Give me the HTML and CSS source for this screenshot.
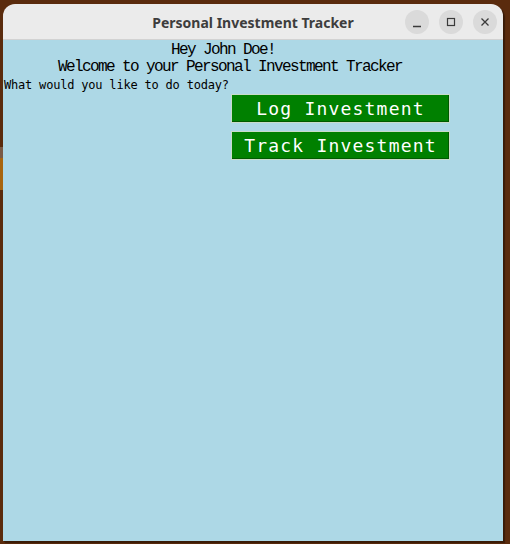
FILE: index.html
```html
<!DOCTYPE html>
<html>
<head>
<meta charset="utf-8">
<link rel="stylesheet" href="styles.css">
</head>
<body>
<div class="desk-mark mark-gray"></div>
<div class="desk-mark mark-orange"></div>
<div class="window">
  <div class="titlebar">
    <div class="title">Personal Investment Tracker</div>
    <div class="controls">
      <span class="ctl"><svg width="24" height="24" viewBox="0 0 24 24"><path d="M8 16.5h8" stroke="#3a3a3a" stroke-width="1.3"/></svg></span>
      <span class="ctl"><svg width="24" height="24" viewBox="0 0 24 24"><rect x="8.5" y="8.5" width="7" height="7" fill="none" stroke="#3a3a3a" stroke-width="1.2"/></svg></span>
      <span class="ctl"><svg width="24" height="24" viewBox="0 0 24 24"><path d="M8.5 8.5l7 7M15.5 8.5l-7 7" stroke="#3a3a3a" stroke-width="1.3"/></svg></span>
    </div>
  </div>
  <div class="content">
    <div class="hey">Hey John Doe!</div>
    <div class="welcome">Welcome to your Personal Investment Tracker</div>
    <div class="question">What would you like to do today?</div>
    <div class="buttons">
      <button class="btn">Log Investment</button>
      <button class="btn">Track Investment</button>
    </div>
  </div>
</div>
</body>
</html>
```

FILE: styles.css
```css
html, body {
  margin: 0;
  padding: 0;
}
body {
  width: 510px;
  height: 544px;
  background: #5a2b0d;
  overflow: hidden;
  position: relative;
  padding-top: 4px;
  padding-left: 3px;
  box-sizing: border-box;
}
.desk-mark {
  position: absolute;
  left: 0;
  width: 3px;
}
.mark-gray {
  top: 147px;
  height: 11px;
  background: #7a5a45;
}
.mark-orange {
  top: 158px;
  height: 32px;
  background: #a8650e;
}
.window {
  width: 500px;
  height: 537px;
  border-radius: 12px 12px 0 0;
  overflow: hidden;
  display: flex;
  flex-direction: column;
  box-shadow: 1px 1px 0 #3a1a06, 2px 2px 1px rgba(0,0,0,0.35);
}
.titlebar {
  height: 35px;
  background: #ebebeb;
  border-bottom: 1px solid #d2d2d2;
  position: relative;
  display: flex;
  align-items: center;
  justify-content: center;
  flex-shrink: 0;
}
.title {
  font-family: "Noto Sans", "DejaVu Sans", sans-serif;
  font-weight: bold;
  font-size: 14px;
  color: #3d3d3d;
  margin-top: 1px;
}
.controls {
  position: absolute;
  right: 6px;
  top: 6px;
  display: flex;
  gap: 10px;
}
.ctl {
  width: 24px;
  height: 24px;
  border-radius: 50%;
  background: #dadada;
  display: block;
}
.ctl svg {
  display: block;
}
.content {
  flex: 1;
  background: #add8e6;
  display: flex;
  flex-direction: column;
}
.hey, .welcome {
  font-family: "Liberation Mono", "DejaVu Sans Mono", monospace;
  font-size: 16px;
  letter-spacing: -1.6px;
  line-height: 17px;
  color: #000;
  white-space: nowrap;
}
.hey {
  padding-left: 168px;
  margin-top: 2px;
}
.welcome {
  padding-left: 55px;
}
.question {
  font-family: "DejaVu Sans Mono", monospace;
  font-size: 12px;
  letter-spacing: -0.2px;
  line-height: 12px;
  color: #000;
  padding-left: 1px;
  margin-top: 3px;
  white-space: nowrap;
}
.buttons {
  margin-left: 228px;
  margin-top: 3px;
  display: flex;
  flex-direction: column;
  gap: 8px;
}
.btn {
  width: 219px;
  height: 29px;
  box-sizing: border-box;
  margin: 0;
  padding: 0;
  background: #008000;
  color: #ffffff;
  font-family: "DejaVu Sans Mono", monospace;
  font-size: 18px;
  letter-spacing: 1.2px;
  border: 1px solid #c9dcc9;
  box-shadow: inset -1px -1px 0 #005a00;
  display: flex;
  align-items: center;
  justify-content: center;
  line-height: 1;
}
```
